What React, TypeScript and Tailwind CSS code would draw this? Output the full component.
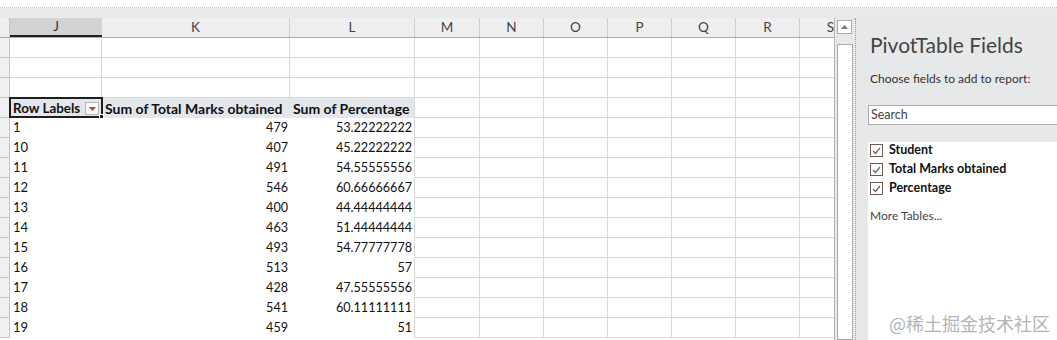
import React from "react";

const cols = ["J", "K", "L", "M", "N", "O", "P", "Q", "R", "S"];

const colW = [
  "w-[92px]",
  "w-[188px]",
  "w-[125px]",
  "w-[65px]",
  "w-[64px]",
  "w-[64px]",
  "w-[64px]",
  "w-[64px]",
  "w-[64px]",
  "w-[35px]",
];

const data = [
  ["1", "479", "53.22222222"],
  ["10", "407", "45.22222222"],
  ["11", "491", "54.55555556"],
  ["12", "546", "60.66666667"],
  ["13", "400", "44.44444444"],
  ["14", "463", "51.44444444"],
  ["15", "493", "54.77777778"],
  ["16", "513", "57"],
  ["17", "428", "47.55555556"],
  ["18", "541", "60.11111111"],
  ["19", "459", "51"],
];

const fields = ["Student", "Total Marks obtained", "Percentage"];

const RowHead = () => (
  <div className="w-[10px] h-[20px] shrink-0 bg-[#f0f0f0] border-r border-b border-[#c6c6c6]" />
);

const EmptyCells = ({ from }: { from: number }) => (
  <>
    {colW.slice(from).map((w, i) => (
      <div key={i} className={`${w} h-[20px] shrink-0 border-r border-b border-[#d8d8d8] bg-white`} />
    ))}
  </>
);

const Sheet = () => {
  return (
    <div className="w-[835px] shrink-0 bg-white border-r border-[#b4b4b4] overflow-hidden">
      {/* column headers */}
      <div className="flex h-[20px] bg-[#efefef] border-b border-[#ababab]">
        <div className="w-[10px] shrink-0 border-r border-[#c6c6c6]" />
        {cols.map((c, i) =>
          i === 0 ? (
            <div
              key={c}
              className="w-[92px] shrink-0 bg-[#d3d3d3] border-b-2 border-[#222] flex items-center justify-center text-[13.5px] text-[#333]"
            >
              {c}
            </div>
          ) : (
            <div
              key={c}
              className={`${colW[i]} shrink-0 border-r border-[#d0d0d0] flex items-center ${
                c === "S" ? "justify-end pr-[1px] border-r-0" : "justify-center"
              } text-[13.5px] text-[#444]`}
            >
              {c}
            </div>
          )
        )}
      </div>

      {/* blank rows */}
      {[0, 1, 2].map((r) => (
        <div key={r} className="flex">
          <RowHead />
          <EmptyCells from={0} />
        </div>
      ))}

      {/* pivot header */}
      <div className="flex">
        <RowHead />
        <div className="relative w-[92px] h-[20px] shrink-0 bg-[#e3e6eb] flex items-center pl-[3px] font-bold text-[13.4px] text-[#111] whitespace-nowrap">
          Row Labels
          <span className="absolute left-[75px] top-[4px] w-[14px] h-[13px] bg-[#f7f7f7] border border-[#b9b9b9] flex items-center justify-center">
            <svg width="7" height="4" viewBox="0 0 7 4">
              <path d="M0 0 L7 0 L3.5 4 Z" fill="#a0522d" />
            </svg>
          </span>
          <span className="absolute -left-[1px] -top-[1px] w-[94px] h-[21px] border-2 border-[#1e1e1e]" />
          <span className="absolute left-[89px] top-[16px] w-[5px] h-[5px] bg-[#1e1e1e] border border-white" />
        </div>
        <div className="w-[188px] h-[20px] shrink-0 bg-[#e3e6eb] flex items-center pl-[3px] font-bold text-[14px] text-[#111] whitespace-nowrap">
          Sum of Total Marks obtained
        </div>
        <div className="w-[125px] h-[20px] shrink-0 bg-[#e3e6eb] border-r border-[#d8d8d8] flex items-center pl-[3px] font-bold text-[14px] text-[#111] whitespace-nowrap overflow-hidden">
          Sum of Percentage
        </div>
        <EmptyCells from={3} />
      </div>

      {/* data */}
      {data.map((d) => (
        <div key={d[0]} className="flex">
          <RowHead />
          <div className="w-[92px] h-[20px] shrink-0 flex items-center pl-[3px] text-[13px] text-[#111]">{d[0]}</div>
          <div className="w-[188px] h-[20px] shrink-0 flex items-center justify-end pr-[2px] text-[12.6px] text-[#111]">
            {d[1]}
          </div>
          <div className="w-[125px] h-[20px] shrink-0 border-r border-[#d8d8d8] flex items-center justify-end pr-[2px] text-[12.6px] text-[#111]">
            {d[2]}
          </div>
          <EmptyCells from={3} />
        </div>
      ))}
    </div>
  );
};

const ScrollBar = () => (
  <div className="w-[21px] shrink-0 bg-[#e9e9e9] border-r border-dotted border-[#9a9a9a] flex flex-col items-start pl-[2px] pt-[2px]">
    <div className="w-[15px] h-[15px] bg-white border border-[#ababab] flex items-center justify-center">
      <svg width="7" height="4" viewBox="0 0 7 4">
        <path d="M0 4 L7 4 L3.5 0 Z" fill="#777" />
      </svg>
    </div>
    <div className="mt-[10px] w-[16px] h-[320px] bg-white border border-[#a9a9a9]" />
  </div>
);

const Check = () => (
  <span className="w-[13px] h-[13px] shrink-0 border border-[#6e5a4e] bg-white flex items-center justify-center">
    <svg width="9" height="8" viewBox="0 0 9 8">
      <path d="M1 4 L3.5 6.5 L8 1" fill="none" stroke="#666" strokeWidth="1.2" />
    </svg>
  </span>
);

const Panel = () => (
  <div className="flex-1 bg-[#e7e8e9] pl-[12px] flex flex-col min-w-0">
    <div className="mt-[14px] ml-[2px] text-[21px] leading-[26px] text-[#444] whitespace-nowrap">PivotTable Fields</div>
    <div className="mt-[13px] ml-[2px] text-[12px] leading-[16px] text-[#333] whitespace-nowrap">
      Choose fields to add to report:
    </div>
    <div className="mt-[18px] h-[20px] bg-white border border-[#ababab] border-r-0 flex items-center pl-[2px] text-[12.5px] text-[#444]">
      Search
    </div>
    <div className="mt-[17px] flex-1 bg-white pl-[2px] flex flex-col">
      <div className="-mt-[1px] flex flex-col">
        {fields.map((f) => (
          <div key={f} className="h-[19px] flex items-center gap-[6px]">
            <Check />
            <span className="font-bold text-[12.5px] text-[#111] whitespace-nowrap">{f}</span>
          </div>
        ))}
      </div>
      <div className="mt-[9px] text-[12px] text-[#444]">More Tables...</div>
    </div>
  </div>
);

export default function App() {
  return (
    <div className="relative w-[1057px] h-[340px] overflow-hidden bg-white font-['Lato',sans-serif]">
      <div className="h-[8px] bg-white border-b border-dotted border-[#c4c4c4]" />
      <div className="flex h-[332px] bg-[#e9eaeb] pt-[10px]">
        <Sheet />
        <ScrollBar />
        <Panel />
      </div>
      <div className="absolute left-[889px] top-[311px] text-[18px] leading-[24px] text-[#b4b4b4] font-['Noto_Sans_CJK_SC',sans-serif]">
        @稀土掘金技术社区
      </div>
    </div>
  );
}
